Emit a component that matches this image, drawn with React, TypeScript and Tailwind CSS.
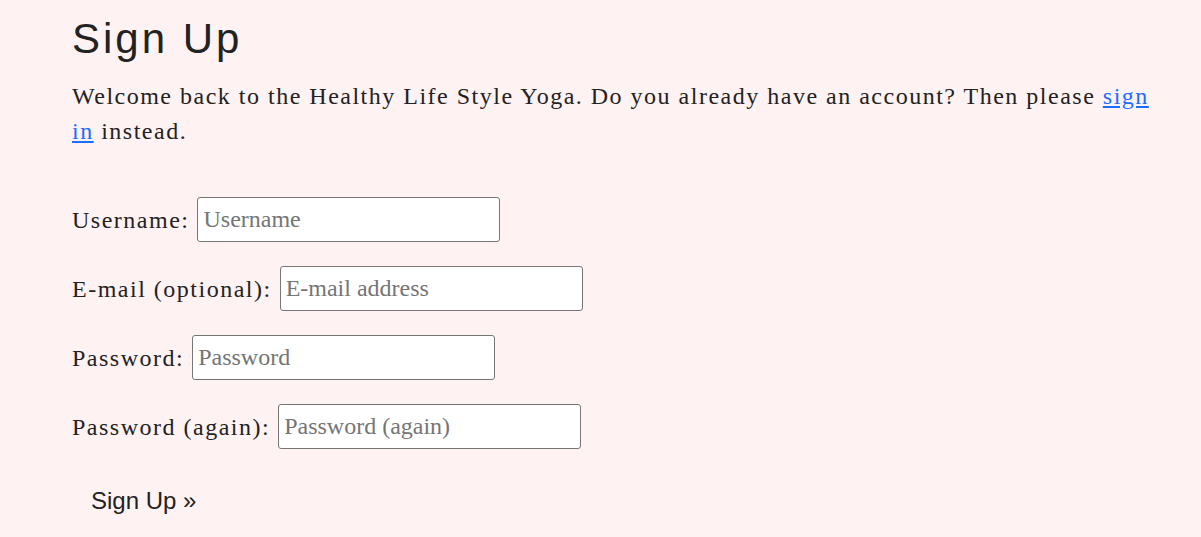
const fields = [
  { id: "username", label: "Username:", placeholder: "Username", type: "text" },
  { id: "email", label: "E-mail (optional):", placeholder: "E-mail address", type: "email" },
  { id: "password1", label: "Password:", placeholder: "Password", type: "password" },
  { id: "password2", label: "Password (again):", placeholder: "Password (again)", type: "password" },
];

export default function App() {
  return (
    <div className="min-h-[537px] bg-[#fff2f2] pl-[72px] pt-[12px] text-[#222222]">
      <div className="w-[1086px]">
        <h1 className="font-['Liberation_Sans',Arial,sans-serif] text-[42px] leading-[54px] tracking-[3px]">
          Sign Up
        </h1>
        <p className="mt-[13px] font-['Liberation_Serif','Times_New_Roman',serif] text-[24px] leading-[35px] tracking-[1.5px]">
          Welcome back to the Healthy Life Style Yoga. Do you already have an
          account? Then please{" "}
          <a href="#" className="text-[#1a6dff] underline">
            sign in
          </a>{" "}
          instead.
        </p>

        <form className="mt-[48px] flex flex-col gap-[24px]">
          {fields.map((f) => (
            <div key={f.id} className="flex items-center gap-[8px]">
              <label
                htmlFor={f.id}
                className="font-['Liberation_Serif','Times_New_Roman',serif] text-[24px] tracking-[1.5px]"
              >
                {f.label}
              </label>
              <input
                id={f.id}
                type={f.type}
                placeholder={f.placeholder}
                className="h-[45px] w-[303px] rounded-[3px] border border-[#767676] bg-white px-[5px] font-['Liberation_Serif','Times_New_Roman',serif] text-[24px] placeholder:text-[#757575] focus:outline-none"
              />
            </div>
          ))}
          <div>
            <button
              type="submit"
              className="mt-[13px] px-[19px] font-['Liberation_Sans',Arial,sans-serif] text-[24px] leading-[30px]"
            >
              Sign Up »
            </button>
          </div>
        </form>
      </div>
    </div>
  );
}
